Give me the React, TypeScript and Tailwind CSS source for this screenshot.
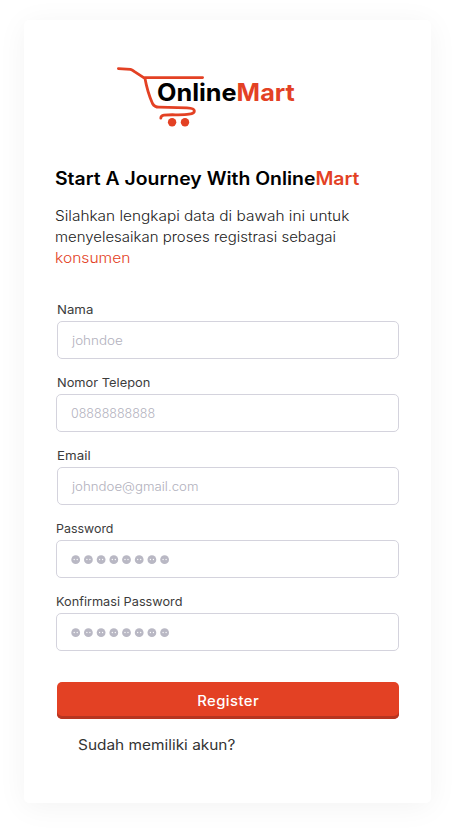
import React from 'react';

type FieldProps = {
  id: string;
  label: string;
  labelClass: string;
  boxClass: string;
  children: React.ReactNode;
};

function Field({ id, label, labelClass, boxClass, children }: FieldProps) {
  return (
    <div className="flex h-[73px] flex-col items-start">
      <label
        htmlFor={id}
        className={`h-[18px] origin-left whitespace-nowrap text-[12px] leading-[18px] text-[#3c3c3c] ${labelClass}`}
      >
        {label}
      </label>
      <div
        id={id}
        className={`mt-[2px] flex h-[38px] items-center rounded-[5px] border border-[#d4d3dd] bg-white pl-[14px] pt-[2px] text-[12.5px] font-light text-[#b2b1bd] ${boxClass}`}
      >
        {children}
      </div>
    </div>
  );
}

function PasswordDots() {
  return (
    <svg width="99" height="10" viewBox="0 0 99 10" aria-label="Password">
      {[0, 1, 2, 3, 4, 5, 6, 7].map((n) => (
        <g key={n} transform={`translate(${n * 12.7} 0)`}>
          <circle cx="4.7" cy="4.7" r="4.4" fill="#b9b8c4" />
          <circle cx="3.2" cy="4.5" r="0.65" fill="#ffffff" />
          <circle cx="6.2" cy="4.5" r="0.65" fill="#ffffff" />
        </g>
      ))}
    </svg>
  );
}

function Logo() {
  return (
    <div className="relative ml-[92px] h-[64px] w-[182px]">
      <svg width="92" height="64" viewBox="0 0 92 64" fill="none" aria-hidden="true">
        <path
          d="M2.4 4.6 L14.5 5.4 Q16.5 6 18.5 7.6 L28.8 14.4 M86.6 13.6 H28.8 C30.5 23 33.5 33 36.5 39.5 Q38.5 43.2 43 43.2 L71 43.9 C81 44.4 80 49.2 73 50.2 C66 51.5 55 50.2 48 51.1 Q44.8 51.6 44.8 54.2"
          stroke="#e34124"
          strokeWidth="2.8"
          strokeLinecap="round"
          strokeLinejoin="round"
        />
        <circle cx="56.1" cy="58.2" r="4.2" fill="#e34124" />
        <circle cx="69" cy="58.2" r="4.2" fill="#e34124" />
      </svg>
      <div className="absolute left-[41px] top-[14px] origin-left scale-x-[1.052] whitespace-nowrap text-[24px] font-bold leading-[30px] text-black">
        Online<span className="text-[#e34124]">Mart</span>
      </div>
    </div>
  );
}

export default function App() {
  return (
    <main className="h-[831px] w-[455px] overflow-hidden bg-white pl-6 pt-5 font-['Inter',sans-serif]">
      <section className="flex h-[783px] w-[407px] flex-col items-start rounded-[5px] bg-white pt-11 shadow-[0_4px_30px_rgba(0,0,0,0.05)]">
        <Logo />
        <h1 className="ml-[31px] mt-[38px] origin-left scale-x-[1.078] whitespace-nowrap text-[18px] font-semibold leading-[26px] text-black">
          Start A Journey With Online<span className="text-[#e34124]">Mart</span>
        </h1>
        <p className="ml-[31px] mt-[13px] whitespace-nowrap text-[14px] font-light leading-[21px] text-[#222222]">
          <span className="block w-fit origin-left scale-x-[1.1]">Silahkan lengkapi data di bawah ini untuk</span>
          <span className="block w-fit origin-left scale-x-[1.068]">menyelesaikan proses registrasi sebagai</span>
          <span className="block w-fit origin-left scale-x-[1.115] text-[#e34124]">konsumen</span>
        </p>
        <form className="mt-[33px] flex flex-col">
          <Field id="nama" label="Nama" labelClass="ml-[33px] scale-x-[1.1]" boxClass="ml-[33px] w-[342px]">
            <span className="origin-left scale-x-[1.075]">johndoe</span>
          </Field>
          <Field id="telepon" label="Nomor Telepon" labelClass="ml-[33px] scale-x-[1.07]" boxClass="ml-[32px] w-[343px]">
            <span>08888888888</span>
          </Field>
          <Field id="email" label="Email" labelClass="ml-[33px] scale-x-[1.11]" boxClass="ml-[33px] w-[342px]">
            <span className="origin-left scale-x-[1.06]">johndoe@gmail.com</span>
          </Field>
          <Field id="password" label="Password" labelClass="ml-[32px] scale-x-[1.035]" boxClass="ml-[32px] w-[343px]">
            <PasswordDots />
          </Field>
          <Field id="konfirmasi" label="Konfirmasi Password" labelClass="ml-[32px] scale-x-[1.06]" boxClass="ml-[32px] w-[343px]">
            <PasswordDots />
          </Field>
          <button
            type="button"
            className="ml-[33px] mt-[16px] flex h-[37px] w-[342px] items-center justify-center rounded-[5px] bg-[#e34124] text-[14px] font-medium tracking-[0.4px] text-white shadow-[inset_0_-3px_0_#b73520]"
          >
            <span className="scale-x-[1.06]">Register</span>
          </button>
        </form>
        <p className="ml-[54px] mt-[15px] origin-left scale-x-[1.1] whitespace-nowrap text-[14px] leading-[21px] text-[#333333]">
          Sudah memiliki akun?
        </p>
      </section>
    </main>
  );
}
